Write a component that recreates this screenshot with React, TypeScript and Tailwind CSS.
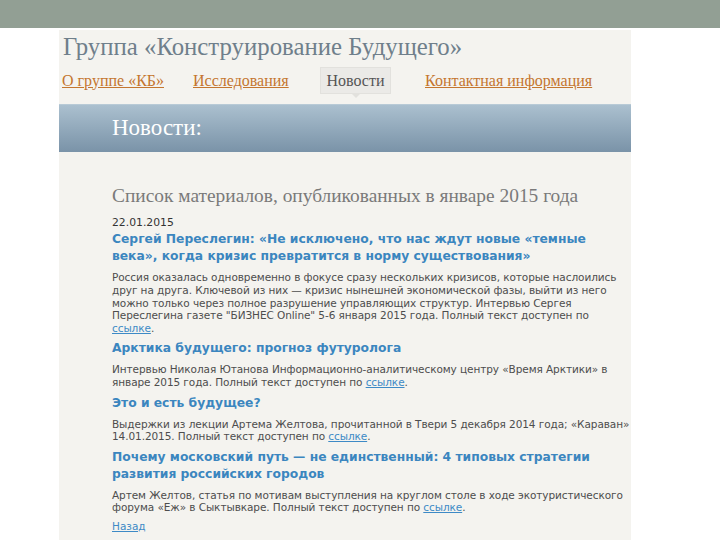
const serif = "font-['Liberation_Serif','DejaVu_Serif',serif]";
const sans = "font-['DejaVu_Sans','Liberation_Sans',sans-serif]";

type Item = {
  date?: string;
  title: string[];
  body: string[];
  linkTail: string;
};

const items: Item[] = [
  {
    date: "22.01.2015",
    title: [
      "Сергей Переслегин: «Не исключено, что нас ждут новые «темные",
      "века», когда кризис превратится в норму существования»",
    ],
    body: [
      "Россия оказалась одновременно в фокусе сразу нескольких кризисов, которые наслоились",
      "друг на друга. Ключевой из них — кризис нынешней экономической фазы, выйти из него",
      "можно только через полное разрушение управляющих структур. Интервью Сергея",
      "Переслегина газете \"БИЗНЕС Online\" 5-6 января 2015 года. Полный текст доступен по",
    ],
    linkTail: "",
  },
  {
    title: ["Арктика будущего: прогноз футуролога"],
    body: [
      "Интервью Николая Ютанова Информационно-аналитическому центру «Время Арктики» в",
    ],
    linkTail: "январе 2015 года. Полный текст доступен по ",
  },
  {
    title: ["Это и есть будущее?"],
    body: [
      "Выдержки из лекции Артема Желтова, прочитанной в Твери 5 декабря 2014 года; «Караван»",
    ],
    linkTail: "14.01.2015. Полный текст доступен по ",
  },
  {
    title: [
      "Почему московский путь — не единственный: 4 типовых стратегии",
      "развития российских городов",
    ],
    body: [
      "Артем Желтов, статья по мотивам выступления на круглом столе в ходе экотуристического",
    ],
    linkTail: "форума «Еж» в Сыктывкаре. Полный текст доступен по ",
  },
];

function NewsItem({ item }: { item: Item }) {
  return (
    <div className="mb-[5.5px]">
      {item.date && (
        <div className="mb-[2px] text-[10.8px] leading-[13px] text-[#333]">{item.date}</div>
      )}
      <div className="mb-[6px] text-[12.3px] font-bold leading-[17px] text-[#3b86bf] whitespace-nowrap">
        {item.title.map((t) => (
          <div key={t}>{t}</div>
        ))}
      </div>
      <div className="text-[10.5px] leading-[12.8px] tracking-[-0.08px] text-[#4d4d4d] whitespace-nowrap">
        {item.body.map((t) => (
          <div key={t}>{t}</div>
        ))}
        <div>
          {item.linkTail}
          <a className="text-[#3d8ac6] underline">ссылке</a>.
        </div>
      </div>
    </div>
  );
}

export default function App() {
  return (
    <div className="h-[540px] w-[720px] overflow-hidden bg-white">
      <div className="h-[28px] bg-[#929f94]" />
      <div className="ml-[59px] mt-[2px] h-[510px] w-[572px] bg-[#f4f3ef]">
        <div className={`${serif} pl-[4px] pt-[3px] text-[24.8px] leading-[28px] text-[#6f7f8b]`}>
          Группа «Конструирование Будущего»
        </div>

        <div className={`${serif} mt-[6px] flex h-[27px] items-center pl-[3px] text-[16px]`}>
          <div className="w-[131px]">
            <a className="text-[#c4762f] underline">О группе «КБ»</a>
          </div>
          <div className="w-[127px]">
            <a className="text-[#c4762f] underline">Исследования</a>
          </div>
          <div className="relative flex h-[27px] w-[71px] items-center justify-center border border-[#e2e1dd] bg-[#ebeae7] text-[#555]">
            Новости
            <span className="absolute left-1/2 top-full -ml-[5px] h-0 w-0 border-l-[5px] border-r-[5px] border-t-[5px] border-l-transparent border-r-transparent border-t-[#e2e1dd]" />
          </div>
          <div className="ml-[34px]">
            <a className="text-[#c4762f] underline">Контактная информация</a>
          </div>
        </div>

        <div className="mt-[10px] flex h-[48px] items-center border-t border-[#b8cad6] bg-gradient-to-b from-[#abc0cf] to-[#7a93a8] pl-[53px]">
          <span className={`${serif} text-[23px] text-white`}>Новости:</span>
        </div>

        <div className={`${sans} pl-[53px]`}>
          <div className={`${serif} mt-[32px] mb-[8px] text-[19.4px] leading-[24px] text-[#7a7a7a]`}>
            Список материалов, опубликованных в январе 2015 года
          </div>
          {items.map((it) => (
            <NewsItem key={it.title[0]} item={it} />
          ))}
          <div className="text-[10.5px] leading-[12.8px]">
            <a className="text-[#3d8ac6] underline">Назад</a>
          </div>
        </div>
      </div>
    </div>
  );
}
